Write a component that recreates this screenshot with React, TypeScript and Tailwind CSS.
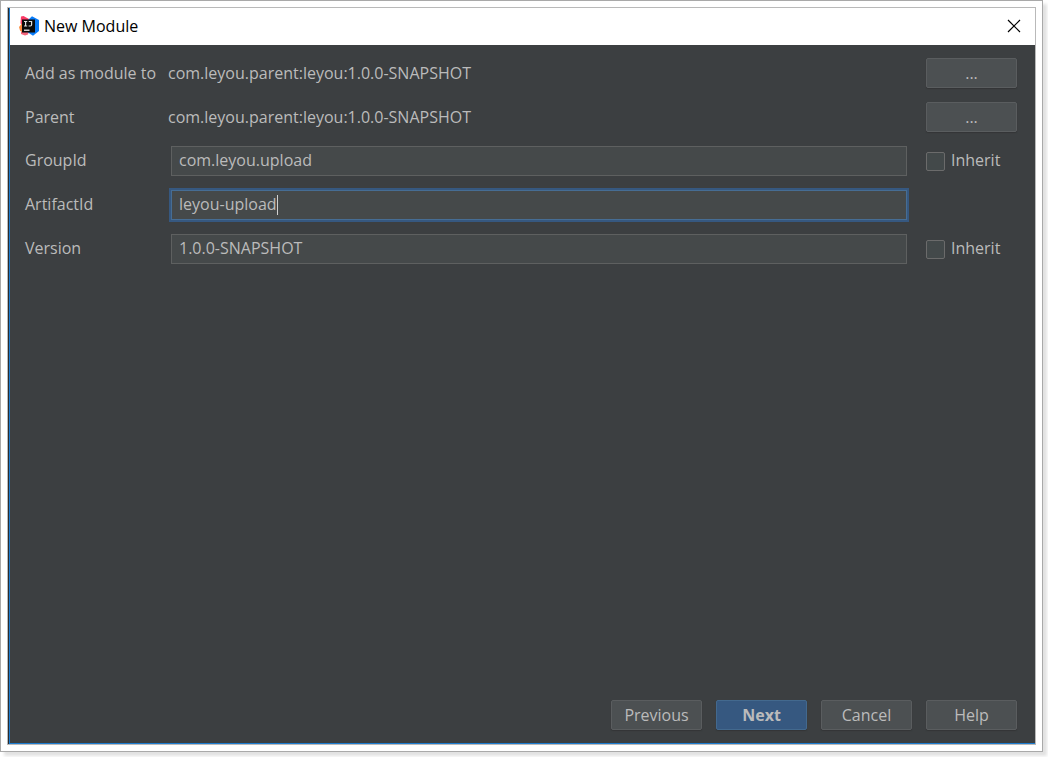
import { useState } from 'react';
import type { ReactNode } from 'react';
import clsx from 'clsx';

const PARENT_MODULE = 'com.leyou.parent:leyou:1.0.0-SNAPSHOT';

const IdeaLogo = () => (
  <svg viewBox="0 0 20 20" className="size-5 shrink-0" aria-hidden="true">
    <path d="M2 0.5 L4.5 0 L10 3 L8 8 L3 11 L1.5 7 Z" fill="#fb3a66" />
    <path d="M0 11 L3 7.5 L6 14 L4 17 L1 14.5 Z" fill="#fb8a3c" />
    <path d="M2 16 L10 15 L9 18.5 L6 19.5 L2 18 Z" fill="#f4657c" />
    <path d="M9.5 3.5 L13 0.3 L20 4 L20 15 L14 19.7 L9 16.5 Z" fill="#087cfa" />
    <rect x="3" y="3.5" width="13" height="13" fill="#0b0b0b" />
    <path
      d="M5 5.5 H8.2 M6.6 5.5 V10 M5 10 H8.2 M9.8 5.5 H12.6 V8.8 Q12.6 10 11.2 10 H9.6"
      fill="none"
      stroke="#e0e0e0"
      strokeWidth="1.2"
    />
    <path d="M5 14.2 H10.5" stroke="#fff" strokeWidth="1.2" />
  </svg>
);

const CloseIcon = () => (
  <svg viewBox="0 0 14 14" className="size-3.5" fill="none" stroke="#000" strokeWidth="1.2" aria-hidden="true">
    <path d="M1 1 L13 13 M13 1 L1 13" />
  </svg>
);

type DialogButtonProps = {
  children: ReactNode;
  primary?: boolean;
  label?: string;
};

const DialogButton = ({ children, primary, label }: DialogButtonProps) => (
  <button
    type="button"
    aria-label={label}
    className={clsx(
      'h-[30px] w-[91px] rounded-xs border leading-5 shadow-[0_1px_1px_#333537]',
      primary
        ? 'border-[#43698e] bg-[#365880] font-bold'
        : 'border-[#5a5d5f] bg-[#4c5052]',
    )}
  >
    {children}
  </button>
);

const InheritCheckbox = ({ label }: { label: string }) => (
  <label className="flex items-center gap-1.5">
    <input
      type="checkbox"
      aria-label={label}
      className="size-[19px] appearance-none rounded-xs border border-[#6b6b6b] bg-[#43494a] checked:bg-[#365880]"
    />
    <span className="pb-0.5">Inherit</span>
  </label>
);

type FieldRowProps = {
  id: string;
  label: string;
  value: string;
  onChange: (value: string) => void;
  active?: boolean;
  children?: ReactNode;
};

const FieldRow = ({ id, label, value, onChange, active, children }: FieldRowProps) => (
  <div className="flex h-11 items-center">
    <label htmlFor={id} className="w-[143px] shrink-0 pb-0.5">
      {label}
    </label>
    <div className="relative mr-[19px] ml-[3px] flex-1">
      <input
        id={id}
        type="text"
        value={value}
        onChange={(e) => onChange(e.target.value)}
        className={clsx(
          'block h-[30px] w-full border bg-[#45494a] px-[7px] pb-0.5 leading-5 outline-none',
          active ? 'border-[#466d94] ring-2 ring-[#365880]' : 'border-[#5e6060]',
        )}
      />
      {active ? (
        <span className="pointer-events-none absolute inset-y-0 left-2 flex items-center" aria-hidden="true">
          <span className="invisible whitespace-pre">{value}</span>
          <span className="h-5 w-px bg-[#d0d0d0]" />
        </span>
      ) : null}
    </div>
    <div className="w-[91px] shrink-0">{children}</div>
  </div>
);

const ModuleRow = ({ label }: { label: string }) => (
  <div className="flex h-11 items-center">
    <span className="w-[143px] shrink-0">{label}</span>
    <span className="flex-1">{PARENT_MODULE}</span>
    <DialogButton label={`Choose: ${label}`}>...</DialogButton>
  </div>
);

const App = () => {
  const [groupId, setGroupId] = useState('com.leyou.upload');
  const [artifactId, setArtifactId] = useState('leyou-upload');
  const [version, setVersion] = useState('1.0.0-SNAPSHOT');

  return (
    <div className="flex min-h-screen bg-white pr-[5px] pb-[5px] font-['Open_Sans',sans-serif] text-base leading-5">
      <div className="flex flex-1 border border-[#a9a9a9] bg-white p-1.5 shadow-[4px_4px_3px_#e2e2e2]">
        <div className="flex flex-1 border border-[#b9b9b9] bg-[#2b2b2b] pl-px">
          <main className="flex flex-1 flex-col border-b border-l border-[#1c7cd0] bg-[#3c3f41] text-[#bbbbbb]">
            <header className="flex h-[37px] items-center bg-white pr-3.5 pb-0.5 pl-[9px] text-black">
              <IdeaLogo />
              <h1 className="ml-[5px] flex-1">New Module</h1>
              <button type="button" aria-label="Close">
                <CloseIcon />
              </button>
            </header>

            <form className="flex-1 pt-1.5 pr-[18px] pl-[15px]" onSubmit={(e) => e.preventDefault()}>
              <ModuleRow label="Add as module to" />
              <ModuleRow label="Parent" />
              <FieldRow id="group-id" label="GroupId" value={groupId} onChange={setGroupId}>
                <InheritCheckbox label="Inherit GroupId" />
              </FieldRow>
              <FieldRow id="artifact-id" label="ArtifactId" value={artifactId} onChange={setArtifactId} active />
              <FieldRow id="version" label="Version" value={version} onChange={setVersion}>
                <InheritCheckbox label="Inherit Version" />
              </FieldRow>
            </form>

            <footer className="flex justify-end gap-3.5 pr-[18px] pb-[13px]">
              <DialogButton>Previous</DialogButton>
              <DialogButton primary>Next</DialogButton>
              <DialogButton>Cancel</DialogButton>
              <DialogButton>Help</DialogButton>
            </footer>
          </main>
        </div>
      </div>
    </div>
  );
};

export default App;
